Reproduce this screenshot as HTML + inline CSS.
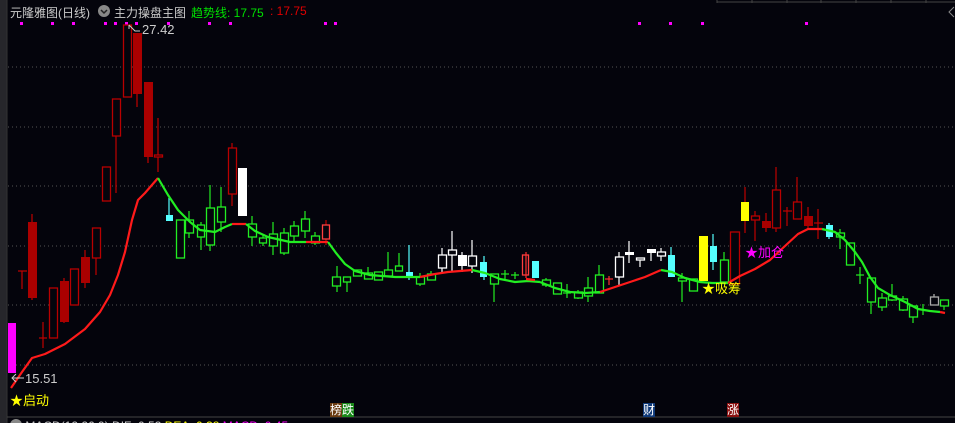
<!DOCTYPE html>
<html><head><meta charset="utf-8"><style>
html,body{margin:0;padding:0;background:#04040c;overflow:hidden}
body{width:955px;height:423px;position:relative;font-family:"Liberation Sans","Noto Sans CJK SC",sans-serif}
svg{position:absolute;left:0;top:0}
.t{position:absolute;white-space:nowrap;font-size:12px}
</style></head><body>
<svg width="955" height="423" viewBox="0 0 955 423">
<rect x="0" y="0" width="7" height="423" fill="#26262b"/>
<line x1="7" y1="0" x2="7" y2="423" stroke="#333" />
<line x1="717" y1="2" x2="955" y2="2" stroke="#444"/>
<g stroke="#444"><line x1="717" y1="0" x2="717" y2="3"/><line x1="752" y1="0" x2="752" y2="3"/><line x1="787" y1="0" x2="787" y2="3"/><line x1="821" y1="0" x2="821" y2="3"/><line x1="856" y1="0" x2="856" y2="3"/><line x1="891" y1="0" x2="891" y2="3"/><line x1="926" y1="0" x2="926" y2="3"/></g>
<path d="M954 7 L949 12 L954 17" fill="none" stroke="#888"/>
<g stroke="#555" stroke-dasharray="1,3"><line x1="8" y1="67" x2="955" y2="67"/><line x1="8" y1="127" x2="955" y2="127"/><line x1="8" y1="186" x2="955" y2="186"/><line x1="8" y1="246" x2="955" y2="246"/><line x1="8" y1="305" x2="955" y2="305"/><line x1="8" y1="365" x2="955" y2="365"/></g>
<line x1="7" y1="417" x2="955" y2="417" stroke="#444"/>
<g fill="#f0f">
<rect x="20" y="22" width="3" height="3"/><rect x="51" y="22" width="3" height="3"/><rect x="72" y="22" width="3" height="3"/><rect x="104" y="22" width="3" height="3"/><rect x="114" y="22" width="3" height="3"/><rect x="125" y="22" width="3" height="3"/><rect x="135" y="22" width="3" height="3"/><rect x="167" y="22" width="3" height="3"/><rect x="208" y="22" width="3" height="3"/><rect x="229" y="22" width="3" height="3"/><rect x="324" y="22" width="3" height="3"/><rect x="334" y="22" width="3" height="3"/><rect x="638" y="22" width="3" height="3"/><rect x="669" y="22" width="3" height="3"/><rect x="701" y="22" width="3" height="3"/><rect x="805" y="22" width="3" height="3"/>
<rect x="8" y="323" width="8" height="50"/>
</g>
<g stroke="#c00000" stroke-width="1.2">
<line x1="22" y1="271" x2="22" y2="289"/><line x1="18" y1="271" x2="27" y2="271"/>
<line x1="32" y1="214" x2="32" y2="300"/>
<line x1="43" y1="322" x2="43" y2="348"/><line x1="39" y1="338" x2="47" y2="338"/>
<line x1="64" y1="278" x2="64" y2="323"/>
<line x1="85" y1="250" x2="85" y2="288"/><line x1="96" y1="228" x2="96" y2="275"/>
<line x1="116" y1="99" x2="116" y2="193"/><line x1="137" y1="33" x2="137" y2="107"/><line x1="148" y1="82" x2="148" y2="163"/>
<line x1="158" y1="118" x2="158" y2="172"/><line x1="232" y1="143" x2="232" y2="206"/>
<line x1="326" y1="220" x2="326" y2="245"/>
<line x1="745" y1="187" x2="745" y2="233"/><line x1="755" y1="211" x2="755" y2="241"/><line x1="766" y1="213" x2="766" y2="232"/><line x1="776" y1="167" x2="776" y2="232"/><line x1="787" y1="207" x2="787" y2="226"/><line x1="783" y1="211" x2="792" y2="211"/><line x1="797" y1="177" x2="797" y2="219"/><line x1="808" y1="207" x2="808" y2="230"/><line x1="818" y1="209" x2="818" y2="239"/><line x1="814" y1="223" x2="823" y2="223"/>
</g>
<g fill="#aa0000"><rect x="28" y="222" width="9" height="76"/><rect x="60" y="281" width="9" height="41"/><rect x="81" y="257" width="9" height="26"/><rect x="133" y="33" width="9" height="61"/><rect x="144" y="82" width="9" height="75"/><rect x="762" y="221" width="9" height="7"/><rect x="804" y="216" width="9" height="10"/></g>
<g fill="#04040c" stroke="#b80000" stroke-width="1.3">
<rect x="49.5" y="288" width="8" height="50"/><rect x="70.5" y="269" width="8" height="36"/><rect x="92.5" y="228" width="8" height="30"/><rect x="102.5" y="167" width="8" height="34"/><rect x="112.5" y="99" width="8" height="37"/><rect x="123.5" y="25" width="8" height="72"/><rect x="154.5" y="155" width="8" height="2"/><rect x="228.5" y="148" width="8" height="46"/>
<rect x="730.5" y="232" width="9" height="52"/><rect x="751.5" y="216" width="8" height="4"/><rect x="772.5" y="190" width="8" height="38"/><rect x="793.5" y="202" width="8" height="17"/>
</g>
<g fill="#04040c" stroke="#ff4040" stroke-width="1.3"><rect x="322.5" y="225" width="7" height="14"/><rect x="522.5" y="255" width="6" height="20"/></g>
<g stroke="#ff3030" stroke-width="1.2"><line x1="526" y1="252" x2="526" y2="278"/><line x1="609" y1="276" x2="609" y2="285"/><line x1="605" y1="279" x2="613" y2="279"/></g>
<g stroke="#55ffff" stroke-width="1.2"><line x1="169" y1="198" x2="169" y2="221"/><line x1="409" y1="245" x2="409" y2="280"/><line x1="484" y1="256" x2="484" y2="280"/><line x1="671" y1="247" x2="671" y2="277"/><line x1="713" y1="234" x2="713" y2="270"/><line x1="829" y1="223" x2="829" y2="239"/></g>
<g fill="#55ffff"><rect x="166" y="215" width="7" height="6"/><rect x="406" y="272" width="7" height="5"/><rect x="480" y="262" width="7" height="15"/><rect x="532" y="261" width="7" height="17"/><rect x="668" y="255" width="7" height="22"/><rect x="710" y="246" width="7" height="16"/><rect x="826" y="225" width="7" height="12"/></g>
<g fill="#ffff00"><rect x="699" y="236" width="9" height="45"/><rect x="741" y="202" width="8" height="19"/></g>
<rect x="238" y="168" width="9" height="48" fill="#fff"/>
<g stroke="#22ee22" stroke-width="1.2">
<line x1="189" y1="211" x2="189" y2="238"/><line x1="201" y1="222" x2="201" y2="250"/><line x1="210" y1="185" x2="210" y2="251"/><line x1="221" y1="187" x2="221" y2="232"/><line x1="252" y1="216" x2="252" y2="246"/><line x1="263" y1="235" x2="263" y2="246"/><line x1="273" y1="222" x2="273" y2="255"/><line x1="284" y1="228" x2="284" y2="255"/><line x1="294" y1="221" x2="294" y2="242"/><line x1="305" y1="211" x2="305" y2="238"/><line x1="315" y1="232" x2="315" y2="245"/>
<line x1="337" y1="266" x2="337" y2="292"/><line x1="347" y1="277" x2="347" y2="292"/><line x1="368" y1="267" x2="368" y2="279"/><line x1="388" y1="252" x2="388" y2="276"/><line x1="399" y1="253" x2="399" y2="271"/><line x1="420" y1="273" x2="420" y2="286"/><line x1="431" y1="271" x2="431" y2="280"/>
<line x1="494" y1="274" x2="494" y2="302"/><line x1="505" y1="270" x2="505" y2="279"/><line x1="501" y1="274" x2="509" y2="274"/><line x1="515" y1="272" x2="515" y2="279"/><line x1="511" y1="275" x2="519" y2="275"/>
<line x1="546" y1="278" x2="546" y2="287"/><line x1="567" y1="284" x2="567" y2="298"/><line x1="563" y1="293" x2="571" y2="293"/><line x1="578" y1="290" x2="578" y2="299"/><line x1="588" y1="277" x2="588" y2="302"/><line x1="599" y1="265" x2="599" y2="293"/>
<line x1="682" y1="273" x2="682" y2="302"/><line x1="724" y1="252" x2="724" y2="282"/>
<line x1="840" y1="229" x2="840" y2="249"/><line x1="860" y1="267" x2="860" y2="284"/><line x1="856" y1="275" x2="864" y2="275"/><line x1="871" y1="278" x2="871" y2="314"/><line x1="882" y1="293" x2="882" y2="311"/><line x1="892" y1="284" x2="892" y2="301"/><line x1="903" y1="296" x2="903" y2="311"/><line x1="913" y1="306" x2="913" y2="323"/><line x1="923" y1="304" x2="923" y2="315"/><line x1="944" y1="300" x2="944" y2="310"/>
</g>
<g fill="#04040c" stroke="#22ee22" stroke-width="1.3">
<rect x="176.5" y="220" width="8" height="38"/><rect x="185.5" y="220" width="8" height="13"/><rect x="197.5" y="225" width="7" height="12"/><rect x="206.5" y="208" width="8" height="37"/><rect x="217.5" y="207" width="8" height="15"/><rect x="248.5" y="224" width="8" height="13"/><rect x="259.5" y="238" width="7" height="5"/><rect x="269.5" y="234" width="8" height="12"/><rect x="280.5" y="233" width="8" height="20"/><rect x="290.5" y="226" width="8" height="10"/><rect x="301.5" y="219" width="8" height="12"/><rect x="311.5" y="236" width="8" height="7"/>
<rect x="332.5" y="277" width="8" height="9"/><rect x="343.5" y="277" width="7" height="5"/><rect x="353.5" y="270" width="8" height="6"/><rect x="364.5" y="273" width="8" height="6"/><rect x="374.5" y="272" width="8" height="8"/><rect x="384.5" y="270" width="8" height="6"/><rect x="395.5" y="266" width="7" height="5"/><rect x="416.5" y="277" width="8" height="7"/><rect x="427.5" y="274" width="8" height="6"/>
<rect x="490.5" y="274" width="8" height="10"/><rect x="542.5" y="280" width="8" height="5"/><rect x="553.5" y="283" width="8" height="11"/><rect x="574.5" y="292" width="8" height="6"/><rect x="584.5" y="288" width="8" height="8"/><rect x="595.5" y="275" width="8" height="18"/>
<rect x="678.5" y="278" width="8" height="3"/><rect x="689.5" y="279" width="8" height="12"/><rect x="720.5" y="260" width="8" height="22"/>
<rect x="836.5" y="233" width="8" height="4"/><rect x="846.5" y="243" width="8" height="22"/><rect x="867.5" y="278" width="8" height="24"/><rect x="878.5" y="298" width="8" height="9"/><rect x="888.5" y="296" width="8" height="4"/><rect x="899.5" y="299" width="8" height="11"/><rect x="909.5" y="306" width="8" height="11"/><rect x="940.5" y="300" width="8" height="6"/>
</g>
<g stroke="#fff" stroke-width="1.2"><line x1="442" y1="248" x2="442" y2="273"/><line x1="452" y1="231" x2="452" y2="272"/><line x1="462" y1="252" x2="462" y2="272"/><line x1="472" y1="240" x2="472" y2="273"/><line x1="619" y1="252" x2="619" y2="285"/><line x1="629" y1="241" x2="629" y2="263"/><line x1="640" y1="258" x2="640" y2="267"/><line x1="651" y1="253" x2="651" y2="261"/><line x1="661" y1="248" x2="661" y2="261"/></g>
<g fill="#04040c" stroke="#fff" stroke-width="1.3"><rect x="438.5" y="255" width="8" height="13"/><rect x="448.5" y="250" width="8" height="5"/><rect x="468.5" y="256" width="8" height="10"/><rect x="615.5" y="257" width="8" height="20"/><rect x="636.5" y="258" width="8" height="2"/><rect x="657.5" y="252" width="8" height="4"/></g>
<g stroke="#aaa" stroke-width="1.3" fill="#04040c"><line x1="934" y1="294" x2="934" y2="297"/><rect x="930.5" y="297" width="8" height="8"/></g>
<g fill="#fff"><rect x="458" y="255" width="9" height="11"/><rect x="625" y="252" width="9" height="3"/><rect x="647" y="249" width="9" height="4"/></g>
<g fill="none" stroke-width="2.2" stroke-linejoin="round">
<polyline stroke="#ff1a1a" points="11,388 22,372 32,358 45,354 65,344 85,329 100,312 110,295 118,275 125,252 132,220 138,200 145,193 158,178"/>
<polyline stroke="#22ee22" points="158,178 168,195 178,210 190,222 200,230 215,232 225,227 232,224"/>
<polyline stroke="#ff1a1a" points="232,224 246,224"/>
<polyline stroke="#22ee22" points="246,224 255,231 268,237 290,242 306,242"/>
<polyline stroke="#ff1a1a" points="306,242 328,242"/>
<polyline stroke="#22ee22" points="328,242 336,253 345,264 355,271 370,275 395,277 420,277"/>
<polyline stroke="#ff1a1a" points="420,277 435,274 448,272 460,271 472,270"/>
<polyline stroke="#22ee22" points="472,270 485,273 500,279 515,282 528,281 540,282"/>
<polyline stroke="#ff1a1a" points="526,279 535,280"/>
<polyline stroke="#22ee22" points="540,282 555,288 570,292 585,293 600,292"/>
<polyline stroke="#ff1a1a" points="600,292 615,287 630,282 645,277 661,270"/>
<polyline stroke="#22ee22" points="661,270 672,272 685,278 700,282 712,283 728,283"/>
<polyline stroke="#ff1a1a" points="728,283 740,276 755,269 770,260 785,246 798,234 808,229 822,229"/>
<polyline stroke="#22ee22" points="822,229 835,232 845,240 855,252 862,262 870,277 878,288 890,295 905,302 918,309 930,311 940,312"/>
<polyline stroke="#ff1a1a" points="940,312 945,313"/>
</g>
<path d="M16 374 L12 378 L16 382 M12 378 L24 378" fill="none" stroke="#ccc" stroke-width="1"/>
<path d="M129 25 L132 28 M129 25 L129 29 M129 25 L135 31 L140 31" fill="none" stroke="#ccc" stroke-width="1"/>
<circle cx="104" cy="11" r="6" fill="#888"/><path d="M101 10 L104 13 L107 10" fill="none" stroke="#222" stroke-width="1.5"/>
</svg>
<div class="t" style="left:10px;top:4px;color:#ccc;font-size:12px">元隆雅图(日线)</div>
<div class="t" style="left:114px;top:4px;color:#ccc;font-size:12px">主力操盘主图</div>
<div class="t" style="left:191px;top:4px;color:#00e000;font-size:12px">趋势线: 17.75</div>
<div class="t" style="left:270px;top:4px;color:#e00000;font-size:12px">: 17.75</div>
<div class="t" style="left:142px;top:22px;color:#ccc;font-size:13px">27.42</div>
<div class="t" style="left:25px;top:371px;color:#ccc;font-size:13px">15.51</div>
<div class="t" style="left:10px;top:390px;color:#ff0;font-size:13px">★启动</div>
<div class="t" style="left:702px;top:278px;color:#ff0;font-size:13px">★吸筹</div>
<div class="t" style="left:745px;top:242px;color:#f0f;font-size:13px">★加仓</div>
<div class="t" style="left:330px;top:403px;font-size:12px;line-height:14px"><span style="background:#6a3a10;color:#fff">榜</span><span style="background:#1a8a1a;color:#fff">跌</span></div>
<div class="t" style="left:643px;top:403px;font-size:12px;line-height:14px;background:#103a7a;color:#fff">财</div>
<div class="t" style="left:727px;top:403px;font-size:12px;line-height:14px;background:#8a1010;color:#fff">涨</div>
<div class="t" style="left:10px;top:419px;color:#ccc;font-size:12px"><span style="display:inline-block;width:12px;height:12px;border-radius:6px;background:#888;vertical-align:top"></span> MACD(12,26,9) DIF: 0.53 <span style="color:#ff0">DEA: 0.38</span> <span style="color:#f0f">MACD: 0.45</span></div>
</body></html>
